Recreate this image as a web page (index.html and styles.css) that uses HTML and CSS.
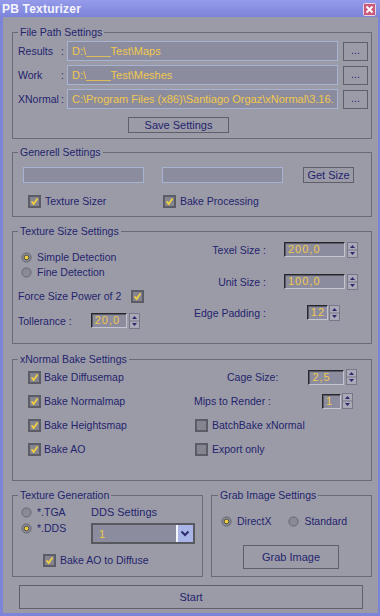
FILE: index.html
```html
<!DOCTYPE html>
<html>
<head>
<meta charset="utf-8">
<link rel="stylesheet" href="styles.css">
</head>
<body>
<div class="titlebar">
  <span class="title">PB Texturizer</span>
  <svg class="close" viewBox="0 0 13 13" width="13" height="13"><rect x="0.5" y="0.5" width="12" height="12" rx="1" fill="#c95a7c" stroke="#e9d6e4"/><path d="M3.5 3.5l6 6M9.5 3.5l-6 6" stroke="#fff" stroke-width="2"/></svg>
</div>
<div class="window">
  <fieldset class="group g-path">
    <legend>File Path Settings</legend>
    <div class="path-row">
      <span class="path-label">Results</span><span class="colon">:</span>
      <div class="path-input">D:\____Test\Maps</div>
      <div class="btn btn-dots">...</div>
    </div>
    <div class="path-row">
      <span class="path-label">Work</span><span class="colon">:</span>
      <div class="path-input">D:\____Test\Meshes</div>
      <div class="btn btn-dots">...</div>
    </div>
    <div class="path-row">
      <span class="path-label">XNormal</span><span class="colon">:</span>
      <div class="path-input">C:\Program Files (x86)\Santiago Orgaz\xNormal\3.16.</div>
      <div class="btn btn-dots">...</div>
    </div>
    <div class="btn btn-save">Save Settings</div>
  </fieldset>

  <fieldset class="group g-gen">
    <legend>Generell Settings</legend>
    <div class="gen-row">
      <div class="gen-input"></div>
      <div class="gen-input"></div>
      <div class="btn btn-size">Get Size</div>
    </div>
    <div class="gen-checks">
      <label class="check"><svg class="cb" viewBox="0 0 13 13"><rect x="1" y="1" width="11" height="11" fill="#85858f" stroke="#5c5c67" stroke-width="2"/><path d="M3.6 6.4l2.1 2.6 3.8-5.6" fill="none" stroke="#f2d040" stroke-width="1.7"/></svg>Texture Sizer</label>
      <label class="check"><svg class="cb" viewBox="0 0 13 13"><rect x="1" y="1" width="11" height="11" fill="#85858f" stroke="#5c5c67" stroke-width="2"/><path d="M3.6 6.4l2.1 2.6 3.8-5.6" fill="none" stroke="#f2d040" stroke-width="1.7"/></svg>Bake Processing</label>
    </div>
  </fieldset>

  <fieldset class="group g-size">
    <legend>Texture Size Settings</legend>
    <div class="size-cols">
      <div class="size-left">
        <label class="radio"><svg class="rb" viewBox="0 0 11 11"><circle cx="5.5" cy="5.5" r="4.6" fill="#8a8a96" stroke="#66666f"/><circle cx="5.5" cy="5.5" r="2.3" fill="#f0d040" stroke="#3a3a3c" stroke-width=".8"/></svg>Simple Detection</label>
        <label class="radio radio-fine"><svg class="rb" viewBox="0 0 11 11"><circle cx="5.5" cy="5.5" r="4.6" fill="#8a8a96" stroke="#66666f"/></svg>Fine Detection</label>
        <label class="check force">Force Size Power of 2<svg class="cb" viewBox="0 0 13 13"><rect x="1" y="1" width="11" height="11" fill="#85858f" stroke="#5c5c67" stroke-width="2"/><path d="M3.6 6.4l2.1 2.6 3.8-5.6" fill="none" stroke="#f2d040" stroke-width="1.7"/></svg></label>
        <div class="spin-row toll">
          <span class="spin-label">Tollerance :</span>
          <div class="spin-field w-toll">20,0</div>
          <svg class="arrows" viewBox="0 0 11 16"><rect x="0.5" y="0.5" width="10" height="15" fill="#a9a9b8" stroke="#77778a"/><line x1="0.5" y1="8" x2="10.5" y2="8" stroke="#77778a"/><path d="M3 6h5l-2.5-3z M3 10h5l-2.5 3z" fill="#2b2b6e"/></svg>
        </div>
      </div>
      <div class="size-right">
        <div class="spin-row">
          <span class="spin-label right">Texel Size :</span>
          <div class="spin-field w-texel">200,0</div>
          <svg class="arrows" viewBox="0 0 11 16"><rect x="0.5" y="0.5" width="10" height="15" fill="#a9a9b8" stroke="#77778a"/><line x1="0.5" y1="8" x2="10.5" y2="8" stroke="#77778a"/><path d="M3 6h5l-2.5-3z M3 10h5l-2.5 3z" fill="#2b2b6e"/></svg>
        </div>
        <div class="spin-row unit">
          <span class="spin-label right">Unit Size :</span>
          <div class="spin-field w-texel">100,0</div>
          <svg class="arrows" viewBox="0 0 11 16"><rect x="0.5" y="0.5" width="10" height="15" fill="#a9a9b8" stroke="#77778a"/><line x1="0.5" y1="8" x2="10.5" y2="8" stroke="#77778a"/><path d="M3 6h5l-2.5-3z M3 10h5l-2.5 3z" fill="#2b2b6e"/></svg>
        </div>
        <div class="spin-row edge">
          <span class="spin-label">Edge Padding :</span>
          <div class="spin-field w-edge">12</div>
          <svg class="arrows tight" viewBox="0 0 11 16"><rect x="0.5" y="0.5" width="10" height="15" fill="#a9a9b8" stroke="#77778a"/><line x1="0.5" y1="8" x2="10.5" y2="8" stroke="#77778a"/><path d="M3 6h5l-2.5-3z M3 10h5l-2.5 3z" fill="#2b2b6e"/></svg>
        </div>
      </div>
    </div>
  </fieldset>

  <fieldset class="group g-bake">
    <legend>xNormal Bake Settings</legend>
    <div class="bake-grid">
      <label class="check bake-left"><svg class="cb" viewBox="0 0 13 13"><rect x="1" y="1" width="11" height="11" fill="#85858f" stroke="#5c5c67" stroke-width="2"/><path d="M3.6 6.4l2.1 2.6 3.8-5.6" fill="none" stroke="#f2d040" stroke-width="1.7"/></svg>Bake Diffusemap</label>
      <div class="spin-row cage">
        <span class="spin-label">Cage Size:</span>
        <div class="spin-field w-cage">2,5</div>
        <svg class="arrows" viewBox="0 0 11 16"><rect x="0.5" y="0.5" width="10" height="15" fill="#a9a9b8" stroke="#77778a"/><line x1="0.5" y1="8" x2="10.5" y2="8" stroke="#77778a"/><path d="M3 6h5l-2.5-3z M3 10h5l-2.5 3z" fill="#2b2b6e"/></svg>
      </div>
      <label class="check bake-left"><svg class="cb" viewBox="0 0 13 13"><rect x="1" y="1" width="11" height="11" fill="#85858f" stroke="#5c5c67" stroke-width="2"/><path d="M3.6 6.4l2.1 2.6 3.8-5.6" fill="none" stroke="#f2d040" stroke-width="1.7"/></svg>Bake Normalmap</label>
      <div class="spin-row mips">
        <span class="spin-label">Mips to Render :</span>
        <div class="spin-field w-mips">1</div>
        <svg class="arrows tight" viewBox="0 0 11 16"><rect x="0.5" y="0.5" width="10" height="15" fill="#a9a9b8" stroke="#77778a"/><line x1="0.5" y1="8" x2="10.5" y2="8" stroke="#77778a"/><path d="M3 6h5l-2.5-3z M3 10h5l-2.5 3z" fill="#2b2b6e"/></svg>
      </div>
      <label class="check bake-left"><svg class="cb" viewBox="0 0 13 13"><rect x="1" y="1" width="11" height="11" fill="#85858f" stroke="#5c5c67" stroke-width="2"/><path d="M3.6 6.4l2.1 2.6 3.8-5.6" fill="none" stroke="#f2d040" stroke-width="1.7"/></svg>Bake Heightsmap</label>
      <label class="check bake-right"><svg class="cb" viewBox="0 0 13 13"><rect x="1" y="1" width="11" height="11" fill="#85858f" stroke="#5c5c67" stroke-width="2"/></svg>BatchBake xNormal</label>
      <label class="check bake-left"><svg class="cb" viewBox="0 0 13 13"><rect x="1" y="1" width="11" height="11" fill="#85858f" stroke="#5c5c67" stroke-width="2"/><path d="M3.6 6.4l2.1 2.6 3.8-5.6" fill="none" stroke="#f2d040" stroke-width="1.7"/></svg>Bake AO</label>
      <label class="check bake-right"><svg class="cb" viewBox="0 0 13 13"><rect x="1" y="1" width="11" height="11" fill="#85858f" stroke="#5c5c67" stroke-width="2"/></svg>Export only</label>
    </div>
  </fieldset>

  <div class="bottom-groups">
    <fieldset class="group g-texgen">
      <legend>Texture Generation</legend>
      <div class="tg-top">
        <div class="tg-radios">
          <label class="radio"><svg class="rb" viewBox="0 0 11 11"><circle cx="5.5" cy="5.5" r="4.6" fill="#8a8a96" stroke="#66666f"/></svg>*.TGA</label>
          <label class="radio radio-dds"><svg class="rb" viewBox="0 0 11 11"><circle cx="5.5" cy="5.5" r="4.6" fill="#8a8a96" stroke="#66666f"/><circle cx="5.5" cy="5.5" r="2.3" fill="#f0d040" stroke="#3a3a3c" stroke-width=".8"/></svg>*.DDS</label>
        </div>
        <div class="tg-dds">
          <span class="dds-label">DDS Settings</span>
          <div class="dropdown">
            <span class="dd-value">1</span>
            <svg class="dd-arrow" viewBox="0 0 17 17"><rect width="17" height="17" fill="#a9b5e6"/><rect width="2" height="17" fill="#f4f6ff"/><path d="M5.5 6.5l3.5 3.5 3.5-3.5" fill="none" stroke="#2b2b6e" stroke-width="2"/></svg>
          </div>
        </div>
      </div>
      <label class="check ao-diffuse"><svg class="cb" viewBox="0 0 13 13"><rect x="1" y="1" width="11" height="11" fill="#85858f" stroke="#5c5c67" stroke-width="2"/><path d="M3.6 6.4l2.1 2.6 3.8-5.6" fill="none" stroke="#f2d040" stroke-width="1.7"/></svg>Bake AO to Diffuse</label>
    </fieldset>

    <fieldset class="group g-grab">
      <legend>Grab Image Settings</legend>
      <div class="grab-radios">
        <label class="radio"><svg class="rb" viewBox="0 0 11 11"><circle cx="5.5" cy="5.5" r="4.6" fill="#8a8a96" stroke="#66666f"/><circle cx="5.5" cy="5.5" r="2.3" fill="#f0d040" stroke="#3a3a3c" stroke-width=".8"/></svg>DirectX</label>
        <label class="radio radio-std"><svg class="rb" viewBox="0 0 11 11"><circle cx="5.5" cy="5.5" r="4.6" fill="#8a8a96" stroke="#66666f"/></svg>Standard</label>
      </div>
      <div class="btn btn-grab">Grab Image</div>
    </fieldset>
  </div>

  <div class="btn btn-start">Start</div>
</div>
</body>
</html>
```

FILE: styles.css
```css
html, body {
  margin: 0;
  padding: 0;
}
body {
  width: 380px;
  height: 616px;
  background: #9b9ba8;
  font-family: "Liberation Sans", Arial, sans-serif;
  font-size: 10.5px;
  color: #24246c;
  overflow: hidden;
}

.titlebar {
  height: 17px;
  background: linear-gradient(#959bea, #7c84da);
  display: flex;
  align-items: center;
  justify-content: space-between;
  padding: 0 4px 0 2px;
}
.title {
  color: #f4f4ff;
  font-weight: bold;
  font-size: 12px;
  letter-spacing: 0.2px;
}
.close {
  display: block;
  margin-top: 1px;
}

.window {
  height: 599px;
  box-sizing: border-box;
  border: 0 solid #7c84da;
  border-width: 0 2px 3px 3px;
  padding: 8px 6px 0 9px;
}

.group {
  margin: 0;
  padding: 0 6px 0 5px;
  border: 1px solid #6b6b76;
  min-width: 0;
  box-sizing: border-box;
}
.group legend {
  padding: 0 2px;
  line-height: 14px;
  height: 14px;
}

/* File path group */
.g-path {
  height: 114px;
}
.path-row {
  display: grid;
  grid-template-columns: 42px 7px 271px 25px;
  align-items: center;
  height: 20px;
  margin-top: 4px;
}
.path-row:first-of-type {
  margin-top: 2px;
}
.colon {
  padding-left: 1px;
}
.path-input {
  height: 20px;
  box-sizing: border-box;
  border: 1px solid #a7b3d3;
  background: #8c8c9f;
  color: #f0c84c;
  font-size: 11px;
  line-height: 18px;
  padding-left: 4px;
  white-space: nowrap;
  overflow: hidden;
}
.btn {
  box-sizing: border-box;
  border: 1px solid #5f5f6a;
  text-align: center;
  color: #24246c;
}
.btn-dots {
  margin-left: 5px;
  height: 19px;
  width: 25px;
  line-height: 15px;
}
.btn-save {
  width: 101px;
  height: 16px;
  line-height: 14px;
  margin: 8px 0 0 110px;
  font-size: 11px;
}

/* Generell group */
.g-gen {
  margin-top: 6px;
  height: 72px;
}
.gen-row {
  display: flex;
  margin: 8px 0 0 5px;
  height: 16px;
}
.gen-input {
  width: 121px;
  height: 16px;
  box-sizing: border-box;
  border: 1px solid #a7b3d3;
  background: #8c8c9f;
  margin-right: 18px;
}
.btn-size {
  margin-left: 2px;
  width: 51px;
  height: 16px;
  line-height: 14px;
  font-size: 11px;
}
.gen-checks {
  display: grid;
  grid-template-columns: 135px 1fr;
  margin: 11px 0 0 10px;
  height: 14px;
}
.check, .radio {
  display: flex;
  align-items: center;
  height: 14px;
  line-height: 14px;
  white-space: nowrap;
}
.cb {
  width: 13px;
  height: 13px;
  flex: none;
  margin-right: 4px;
}
.rb {
  width: 11px;
  height: 11px;
  flex: none;
  margin-right: 5px;
}

/* Texture size group */
.g-size {
  margin-top: 7px;
  height: 120px;
}
.size-cols {
  display: flex;
}
.size-left {
  width: 176px;
  padding-top: 12px;
}
.size-left .radio {
  margin-left: 3px;
}
.radio-fine {
  margin-top: 1px;
}
.force {
  margin-top: 10px;
}
.force .cb {
  margin: 0 0 0 10px;
}
.toll {
  margin-top: 10px;
  height: 16px;
}
.size-right {
  padding-top: 4px;
}
.spin-row {
  display: flex;
  align-items: center;
  height: 15px;
}
.spin-label {
  white-space: nowrap;
}
.spin-label.right {
  width: 72px;
  text-align: right;
  margin-right: 18px;
}
.spin-field {
  height: 15px;
  box-sizing: border-box;
  border: 1px solid;
  border-color: #26262c #c4c4d0 #c4c4d0 #26262c;
  box-shadow: inset 1px 1px 0 #5a5a64;
  background: #8c8c9f;
  color: #f0c84c;
  font-size: 11px;
  line-height: 13px;
  padding-left: 3px;
  letter-spacing: 1px;
}
.arrows {
  width: 11px;
  height: 16px;
  flex: none;
  margin-left: 2px;
}
.arrows.tight {
  margin-left: 1px;
}
.w-texel { width: 61px; }
.w-toll { width: 36px; margin-left: 19px; }
.w-edge { width: 21px; margin-left: 41px; }
.w-cage { width: 36px; margin-left: 30px; }
.w-mips { width: 19px; margin-left: 51px; }
.unit { margin-top: 17px; }
.edge { margin-top: 16px; }

/* Bake group */
.g-bake {
  margin-top: 8px;
  height: 129px;
}
.bake-grid {
  display: grid;
  grid-template-columns: 176px 1fr;
  grid-auto-rows: 14px;
  row-gap: 10px;
  margin-top: 4px;
  align-items: center;
}
.bake-left {
  margin-left: 10px;
}
.bake-left .cb {
  margin-right: 3px;
}
.cage .spin-label {
  margin-left: 33px;
}
.bake-right {
  margin-left: 1px;
}

/* bottom groups */
.bottom-groups {
  display: flex;
  margin-top: 7px;
  gap: 8px;
}
.g-texgen {
  width: 191px;
  height: 89px;
}
.tg-top {
  display: flex;
  margin-top: 3px;
}
.tg-radios {
  width: 73px;
}
.tg-radios .radio {
  margin-left: 3px;
}
.radio-dds {
  margin-top: 2px;
}
.dds-label {
  display: block;
  height: 14px;
  line-height: 14px;
  font-size: 11px;
}
.dropdown {
  margin-top: 4px;
  width: 104px;
  height: 21px;
  box-sizing: border-box;
  border: 2px solid #58585f;
  background: #8c8c9f;
  display: flex;
  align-items: center;
  justify-content: space-between;
}
.dd-value {
  color: #f0c84c;
  padding-left: 6px;
  font-size: 11px;
}
.dd-arrow {
  width: 17px;
  height: 17px;
  display: block;
}
.ao-diffuse {
  margin: 9px 0 0 25px;
}
.g-grab {
  width: 161px;
  height: 89px;
  padding-left: 6px;
}
.grab-radios {
  display: flex;
  margin: 12px 0 0 3px;
}
.radio-std {
  margin-left: 17px;
}
.btn-grab {
  width: 96px;
  height: 24px;
  line-height: 22px;
  margin: 17px 0 0 25px;
  font-size: 11px;
}
.btn-start {
  width: 344px;
  height: 24px;
  line-height: 22px;
  margin: 8px 0 0 7px;
  font-size: 11px;
}
```
